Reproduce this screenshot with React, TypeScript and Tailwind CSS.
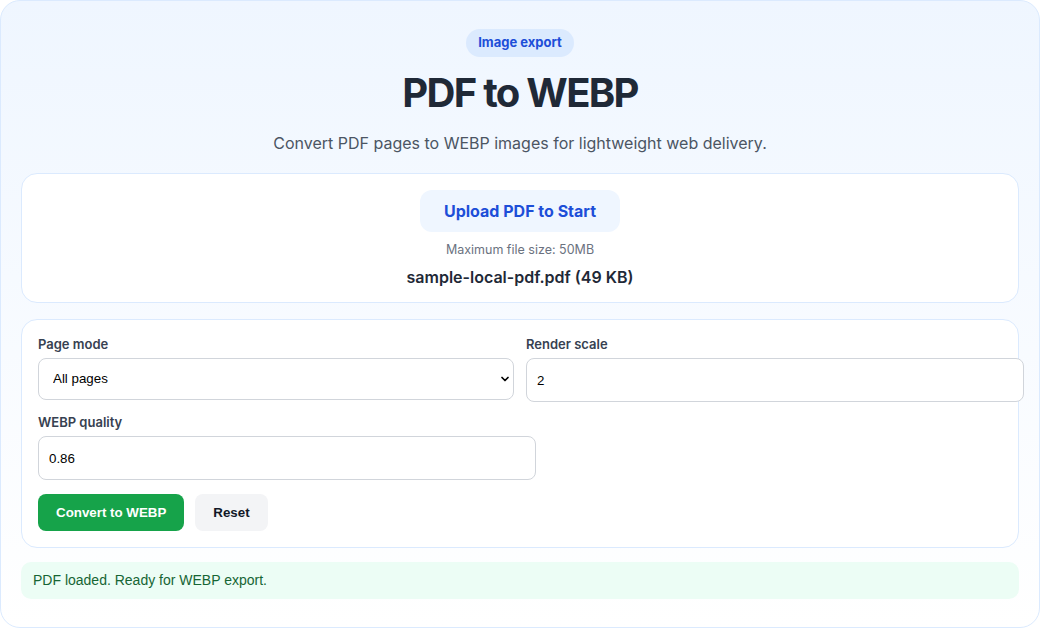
import { ChevronDown } from 'lucide-react';

const inter = "font-['Inter','Noto_Sans',sans-serif]";
const arial = "font-['Liberation_Sans',Arial,sans-serif]";

function Field({ label, children }: { label: string; children: React.ReactNode }) {
  return (
    <div className="flex flex-col">
      <label className={`${inter} text-[13px] leading-4 font-semibold text-[#374151] mb-[6px]`}>{label}</label>
      {children}
    </div>
  );
}

export default function App() {
  return (
    <div className={`${inter} w-[1040px] h-[628px] bg-white`}>
      <div className="w-full h-full rounded-[20px] border border-[#dbeafe] bg-gradient-to-b from-[#eff6ff] to-white px-5 pt-7 pb-7 flex flex-col">
        <div className="flex justify-center shrink-0">
          <span className="h-7 px-3 rounded-full bg-[#dbeafe] text-[#1d4ed8] text-[13px] font-bold flex items-center">
            Image export
          </span>
        </div>
        <h1 className="mt-3 text-center text-[40px] leading-[48px] font-bold tracking-[-1.7px] text-[#1f2937] shrink-0">
          PDF to WEBP
        </h1>
        <p className="mt-[14px] text-center text-[16px] leading-6 text-[#4b5563] shrink-0">
          Convert PDF pages to WEBP images for lightweight web delivery.
        </p>

        <div className="mt-[18px] shrink-0 rounded-2xl border border-[#dbeafe] bg-white pt-4 pb-[13px] flex flex-col items-center">
          <button className="h-[42px] px-6 rounded-xl bg-[#eff6ff] text-[#1d4ed8] text-[16px] font-bold">
            Upload PDF to Start
          </button>
          <div className="mt-[10px] text-[12.5px] leading-4 text-[#6b7280]">Maximum file size: 50MB</div>
          <div className="mt-[7px] text-[16px] leading-6 font-semibold text-[#1f2937]">sample-local-pdf.pdf (49 KB)</div>
        </div>

        <div className="mt-4 shrink-0 rounded-2xl border border-[#dbeafe] bg-white p-4">
          <div className="grid grid-cols-2 gap-x-3 gap-y-3">
            <Field label="Page mode">
              <div className="relative">
                <select
                  className={`${arial} appearance-none w-full h-[42px] rounded-lg border border-[#d1d5db] bg-white pl-[14px] text-[13.33px] text-black`}
                  defaultValue="all"
                >
                  <option value="all">All pages</option>
                </select>
                <ChevronDown className="absolute right-[3px] top-[15px] w-3 h-3 text-black pointer-events-none" strokeWidth={3.5} />
              </div>
            </Field>
            <Field label="Render scale">
              <input
                className={`${arial} w-[498px] h-[44px] rounded-lg border border-[#d1d5db] bg-white px-[10px] text-[13.33px] text-black`}
                defaultValue="2"
              />
            </Field>
            <Field label="WEBP quality">
              <input
                className={`${arial} w-[498px] h-[44px] rounded-lg border border-[#d1d5db] bg-white px-[10px] text-[13.33px] text-black`}
                defaultValue="0.86"
              />
            </Field>
          </div>
          <div className="mt-[14px] flex gap-[11px]">
            <button className={`${arial} h-[37px] px-[18px] rounded-lg bg-[#16a34a] text-white text-[13.33px] font-bold`}>
              Convert to WEBP
            </button>
            <button className={`${arial} h-[37px] px-[18px] rounded-lg bg-[#f3f4f6] text-[#111827] text-[13.33px] font-bold`}>
              Reset
            </button>
          </div>
        </div>

        <div className={`${arial} mt-[14px] shrink-0 h-[37px] rounded-[10px] bg-[#ecfdf5] px-3 flex items-center text-[14px] text-[#166534]`}>
          PDF loaded. Ready for WEBP export.
        </div>
      </div>
    </div>
  );
}
